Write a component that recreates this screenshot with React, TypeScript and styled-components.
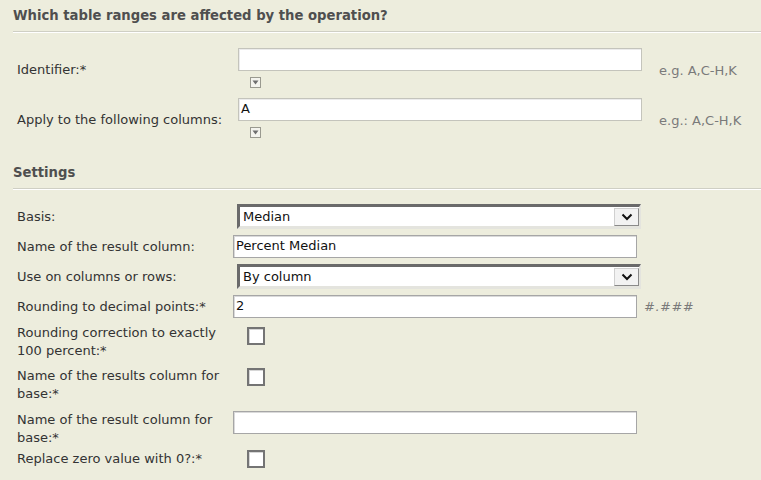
import React from "react";
import styled, { createGlobalStyle } from "styled-components";

const GlobalStyle = createGlobalStyle`
  html, body {
    margin: 0;
    padding: 0;
    background: #ededdd;
  }
  body {
    font-family: "DejaVu Sans", Verdana, sans-serif;
    font-size: 13px;
    color: #333;
  }
`;

const Page = styled.div`
  width: 761px;
  height: 480px;
  overflow: hidden;
  padding-left: 13px;
  box-sizing: border-box;
  background: #ededdd;
`;

const SectionTitle = styled.div<{ $top: number }>`
  margin-top: ${(p) => p.$top}px;
  padding-bottom: 7px;
  font-weight: bold;
  font-size: 13.2px;
  color: #4f4f4f;
  line-height: 16px;
  border-bottom: 1px solid #cfcfc4;
  box-shadow: 0 1px 0 #ffffff;
  white-space: nowrap;
`;

const Rows = styled.div<{ $top: number; $gap: number }>`
  display: flex;
  flex-direction: column;
  gap: ${(p) => p.$gap}px;
  padding-left: 4px;
  margin-top: ${(p) => p.$top}px;
`;

const Row = styled.div<{ $labelWidth: number; $align?: "center" | "start"; $height?: number; $shift?: number }>`
  display: grid;
  grid-template-columns: ${(p) => p.$labelWidth}px auto 1fr;
  align-items: ${(p) => p.$align ?? "center"};
  min-height: ${(p) => p.$height ?? 0}px;
  margin-top: ${(p) => p.$shift ?? 0}px;
`;

const Label = styled.div`
  line-height: 17.5px;
  padding-right: 6px;
`;

const FieldStack = styled.div`
  display: flex;
  flex-direction: column;
  align-items: flex-start;
  gap: 6px;
  padding-bottom: 4px;
`;

const TextBox = styled.div<{ $light?: boolean }>`
  width: 404px;
  height: 23px;
  box-sizing: border-box;
  background: #fff;
  border: 1px solid ${(p) => (p.$light ? "#c4c4bc" : "#a6a6a6")};
  box-shadow: inset 1px 1px 0 ${(p) => (p.$light ? "#ececec" : "#dadada")};
  padding: 1px 2px;
  line-height: 18px;
  color: #111;
  white-space: nowrap;
`;

const Select = styled.div`
  width: 404px;
  height: 25px;
  box-sizing: border-box;
  margin-left: 4px;
  display: flex;
  align-items: center;
  justify-content: space-between;
  background: #fff;
  border-top: 3px solid #6a6a6a;
  border-left: 3px solid #6a6a6a;
  border-right: 2px solid #e4e4de;
  border-bottom: 3px solid #e4e4de;
  padding-left: 3px;
  color: #111;
`;

const SelectButton = styled.div`
  width: 25px;
  height: 18px;
  box-sizing: border-box;
  display: flex;
  align-items: center;
  justify-content: center;
  background: #f2f2f2;
  border: 1px solid #8a8a8a;
  border-top-color: #d0d0d0;
  border-left-color: #d0d0d0;
`;

const MiniToggle = styled.div`
  width: 11px;
  height: 11px;
  box-sizing: border-box;
  margin-left: 12px;
  border: 1px solid #9a9a90;
  background: #f4f4ee;
  display: flex;
  align-items: center;
  justify-content: center;
`;

const Hint = styled.div<{ $gap: number; $italic?: boolean }>`
  padding-left: ${(p) => p.$gap}px;
  color: #7a7a7a;
  font-style: ${(p) => (p.$italic ? "italic" : "normal")};
  letter-spacing: ${(p) => (p.$italic ? "0.5px" : "0")};
  align-self: center;
  white-space: nowrap;
`;

const Check = styled.div<{ $top?: number }>`
  width: 18px;
  height: 18px;
  box-sizing: border-box;
  margin-left: 14px;
  margin-top: ${(p) => p.$top ?? 0}px;
  background: #fff;
  border: 2px solid #747474;
  box-shadow: inset 1px 1px 0 #d6d6d6;
`;

const Chevron = () => (
  <svg width="12" height="8" viewBox="0 0 12 8">
    <path d="M1.5 1.5 L6 6 L10.5 1.5" fill="none" stroke="#111" strokeWidth="2" />
  </svg>
);

const Triangle = () => (
  <svg width="7" height="5" viewBox="0 0 7 5">
    <path d="M0.5 0.5 L6.5 0.5 L3.5 4.5 Z" fill="#6f6f6f" />
  </svg>
);

const DropSelect: React.FC<{ value: string }> = ({ value }) => (
  <Select>
    <span>{value}</span>
    <SelectButton>
      <Chevron />
    </SelectButton>
  </Select>
);

const App: React.FC = () => {
  return (
    <Page>
      <GlobalStyle />
      <SectionTitle $top={8}>Which table ranges are affected by the operation?</SectionTitle>
      <Rows $top={16} $gap={6}>
        <Row $labelWidth={221}>
          <Label>Identifier:*</Label>
          <FieldStack>
            <TextBox $light />
            <MiniToggle>
              <Triangle />
            </MiniToggle>
          </FieldStack>
          <Hint $gap={17}>e.g. A,C-H,K</Hint>
        </Row>
        <Row $labelWidth={221}>
          <Label>Apply to the following columns:</Label>
          <FieldStack>
            <TextBox $light>A</TextBox>
            <MiniToggle>
              <Triangle />
            </MiniToggle>
          </FieldStack>
          <Hint $gap={17}>e.g.: A,C-H,K</Hint>
        </Row>
      </Rows>

      <SectionTitle $top={23}>Settings</SectionTitle>
      <Rows $top={15} $gap={6}>
        <Row $labelWidth={216}>
          <Label>Basis:</Label>
          <DropSelect value="Median" />
        </Row>
        <Row $labelWidth={216}>
          <Label>Name of the result column:</Label>
          <TextBox>Percent Median</TextBox>
        </Row>
        <Row $labelWidth={216}>
          <Label>Use on columns or rows:</Label>
          <DropSelect value="By column" />
        </Row>
        <Row $labelWidth={216}>
          <Label>Rounding to decimal points:*</Label>
          <TextBox>2</TextBox>
          <Hint $gap={7} $italic>
            #.###
          </Hint>
        </Row>
        <Row $labelWidth={216} $align="start" $height={37}>
          <Label>Rounding correction to exactly 100 percent:*</Label>
          <Check $top={3} />
        </Row>
        <Row $labelWidth={216} $align="start" $height={38}>
          <Label>Name of the results column for base:*</Label>
          <Check $top={1} />
        </Row>
        <Row $labelWidth={216} $align="start">
          <Label>Name of the result column for base:*</Label>
          <TextBox>&nbsp;</TextBox>
        </Row>
        <Row $labelWidth={216} $shift={-2}>
          <Label>Replace zero value with 0?:*</Label>
          <Check />
        </Row>
      </Rows>
    </Page>
  );
};

export default App;
